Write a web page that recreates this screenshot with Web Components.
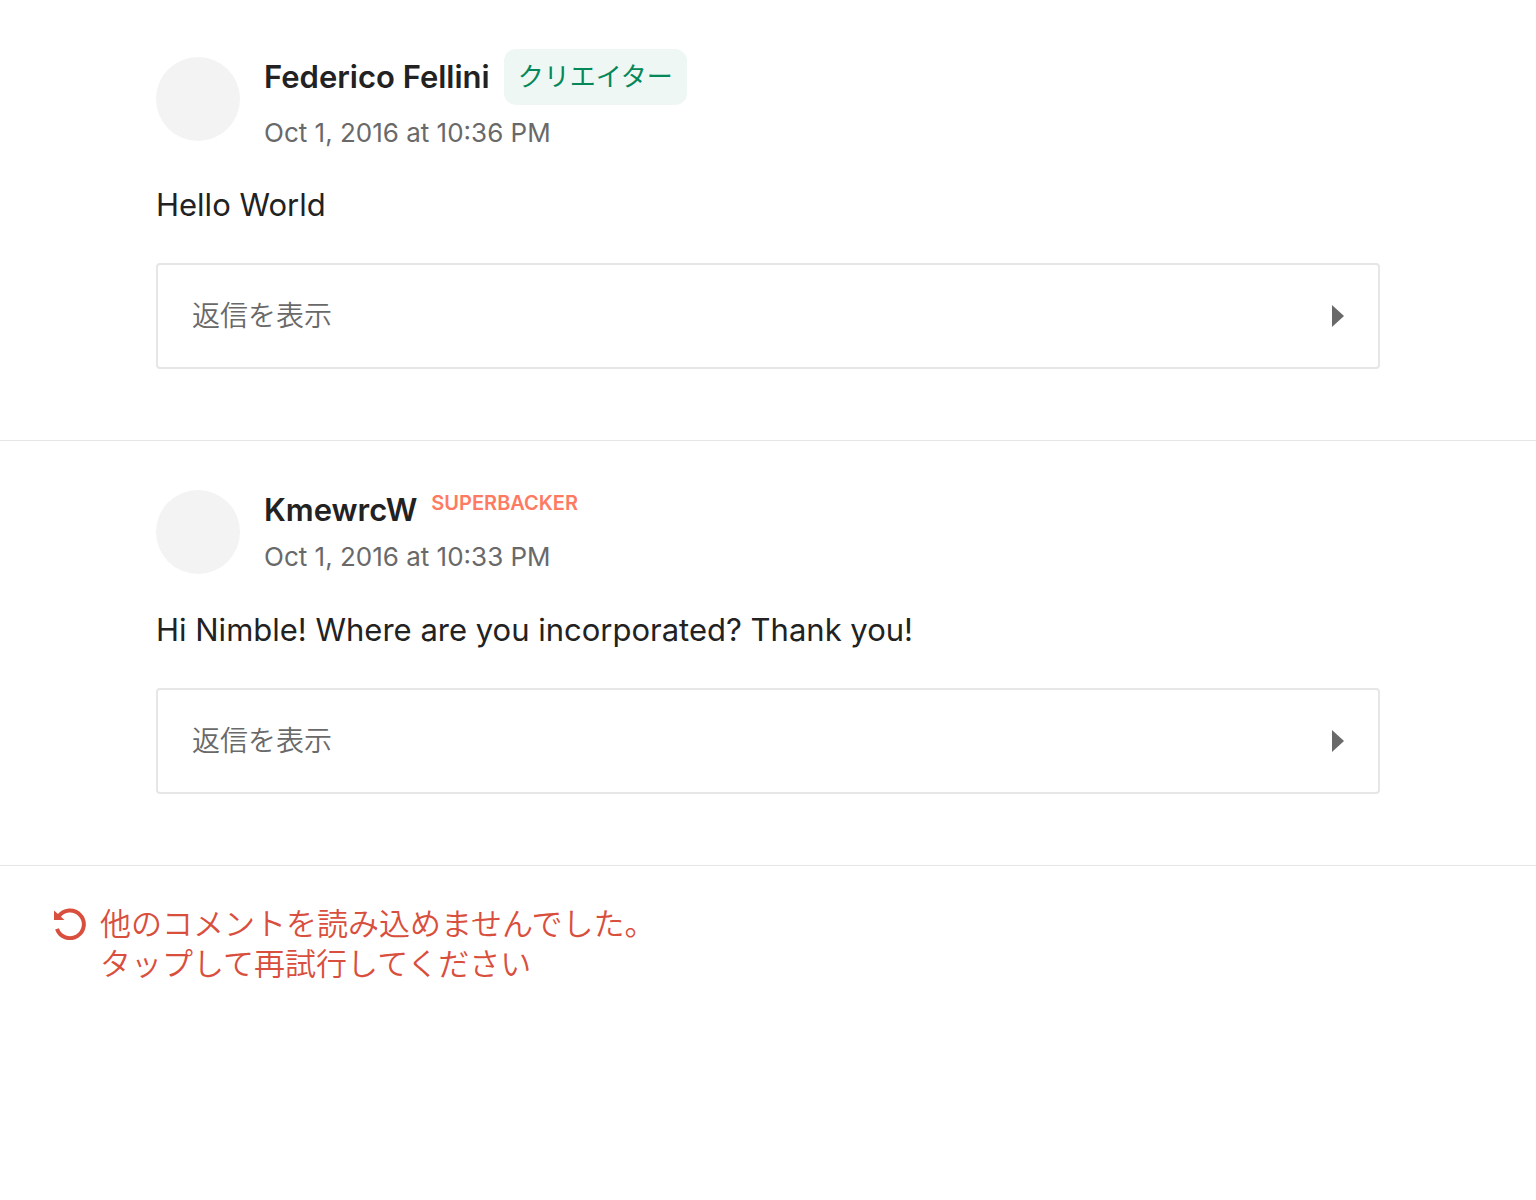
<!DOCTYPE html>
<html lang="ja">
<head>
<meta charset="utf-8">
<meta name="viewport" content="width=device-width, initial-scale=1">
<title>コメント</title>
<style>
  body {
    margin: 0;
    background: #fff;
    color: #222;
    font-family: Inter, "Noto Sans CJK JP", sans-serif;
  }
</style>
</head>
<body>
<comment-list>
  <comment-card>
    <span slot="name">Federico Fellini</span>
    <author-badge slot="badge" kind="creator">クリエイター</author-badge>
    <time slot="date" datetime="2016-10-01T22:36">Oct 1, 2016 at 10:36 PM</time>
    Hello World
    <replies-button slot="replies">返信を表示</replies-button>
  </comment-card>
  <comment-card>
    <span slot="name">KmewrcW</span>
    <author-badge slot="badge" kind="superbacker">SUPERBACKER</author-badge>
    <time slot="date" datetime="2016-10-01T22:33">Oct 1, 2016 at 10:33 PM</time>
    Hi Nimble! Where are you incorporated? Thank you!
    <replies-button slot="replies">返信を表示</replies-button>
  </comment-card>
  <retry-notice>他のコメントを読み込めませんでした。<br>タップして再試行してください</retry-notice>
</comment-list>

<script>
  class ShadowElement extends HTMLElement {
    constructor() {
      super();
      this.attachShadow({ mode: "open" }).innerHTML = this.constructor.markup;
    }
  }

  customElements.define("comment-list", class extends ShadowElement {
    static markup = `
      <style>
        :host { display: block; }
        main { display: flex; flex-direction: column; }
      </style>
      <main><slot></slot></main>`;
  });

  customElements.define("comment-card", class extends ShadowElement {
    static markup = `
      <style>
        :host { display: block; border-bottom: 1px solid #e6e6e6; }
        article { padding: 49px 156px 71px; }
        header { display: flex; align-items: center; gap: 24px; }
        .avatar { flex: none; width: 84px; height: 84px; border-radius: 50%; background: #f3f3f3; }
        .meta { display: flex; flex-direction: column; gap: 12px; }
        .who { display: flex; align-items: center; gap: 14px; }
        h3 { margin: 0; font-size: 31px; line-height: 38px; font-weight: 600; }
        .date { font-size: 26px; line-height: 32px; color: #696969; }
        p { margin: 36px 0 38px; font-size: 31px; line-height: 40px; }
      </style>
      <article>
        <header>
          <div class="avatar"></div>
          <div class="meta">
            <div class="who"><h3><slot name="name"></slot></h3><slot name="badge"></slot></div>
            <div class="date"><slot name="date"></slot></div>
          </div>
        </header>
        <p><slot></slot></p>
        <slot name="replies"></slot>
      </article>`;
  });

  customElements.define("author-badge", class extends ShadowElement {
    static markup = `
      <style>
        :host { display: block; white-space: nowrap; }
        :host([kind="creator"]) {
          padding: 8px 14px; border-radius: 12px;
          background: #eff7f4; color: #048759;
          font-size: 26px; line-height: 40px;
        }
        :host([kind="superbacker"]) {
          align-self: flex-start;
          color: #ff7a62; font-size: 20px; line-height: 24px; font-weight: 600;
        }
      </style>
      <slot></slot>`;
  });

  customElements.define("replies-button", class extends ShadowElement {
    static markup = `
      <style>
        :host { display: block; }
        button {
          display: flex; align-items: center; justify-content: space-between;
          box-sizing: border-box; width: 100%; margin: 0; padding: 31px 34px;
          border: 2px solid #e6e6e6; border-radius: 4px; background: #fff;
          font: inherit; font-size: 28px; line-height: 40px; font-weight: 350; color: #696969; cursor: pointer;
        }
        svg { display: block; }
      </style>
      <button type="button">
        <span><slot></slot></span>
        <svg width="12" height="22" viewBox="0 0 12 22" aria-hidden="true"><path d="M0 0L12 11L0 22Z" fill="#696969"/></svg>
      </button>`;
  });

  customElements.define("retry-notice", class extends ShadowElement {
    static markup = `
      <style>
        :host { display: block; padding: 38px 54px; }
        button {
          display: flex; align-items: flex-start; gap: 14px;
          margin: 0; padding: 0; border: 0; background: none; text-align: left;
          font: inherit; font-size: 31px; line-height: 40px; font-weight: 350; color: #d94f3d; cursor: pointer;
        }
        svg { flex: none; display: block; margin: 4px 0; }
      </style>
      <button type="button">
        <svg width="32" height="32" viewBox="0 0 32 32" aria-hidden="true">
          <path d="M4.6 8.6A13.8 13.8 0 1 1 3 20.8" fill="none" stroke="#d94f3d" stroke-width="4"/>
          <path d="M0 2.6V12H10.4L7 8.8L3.4 5.6Z" fill="#d94f3d"/>
        </svg>
        <span><slot></slot></span>
      </button>`;
  });
</script>
</body>
</html>
